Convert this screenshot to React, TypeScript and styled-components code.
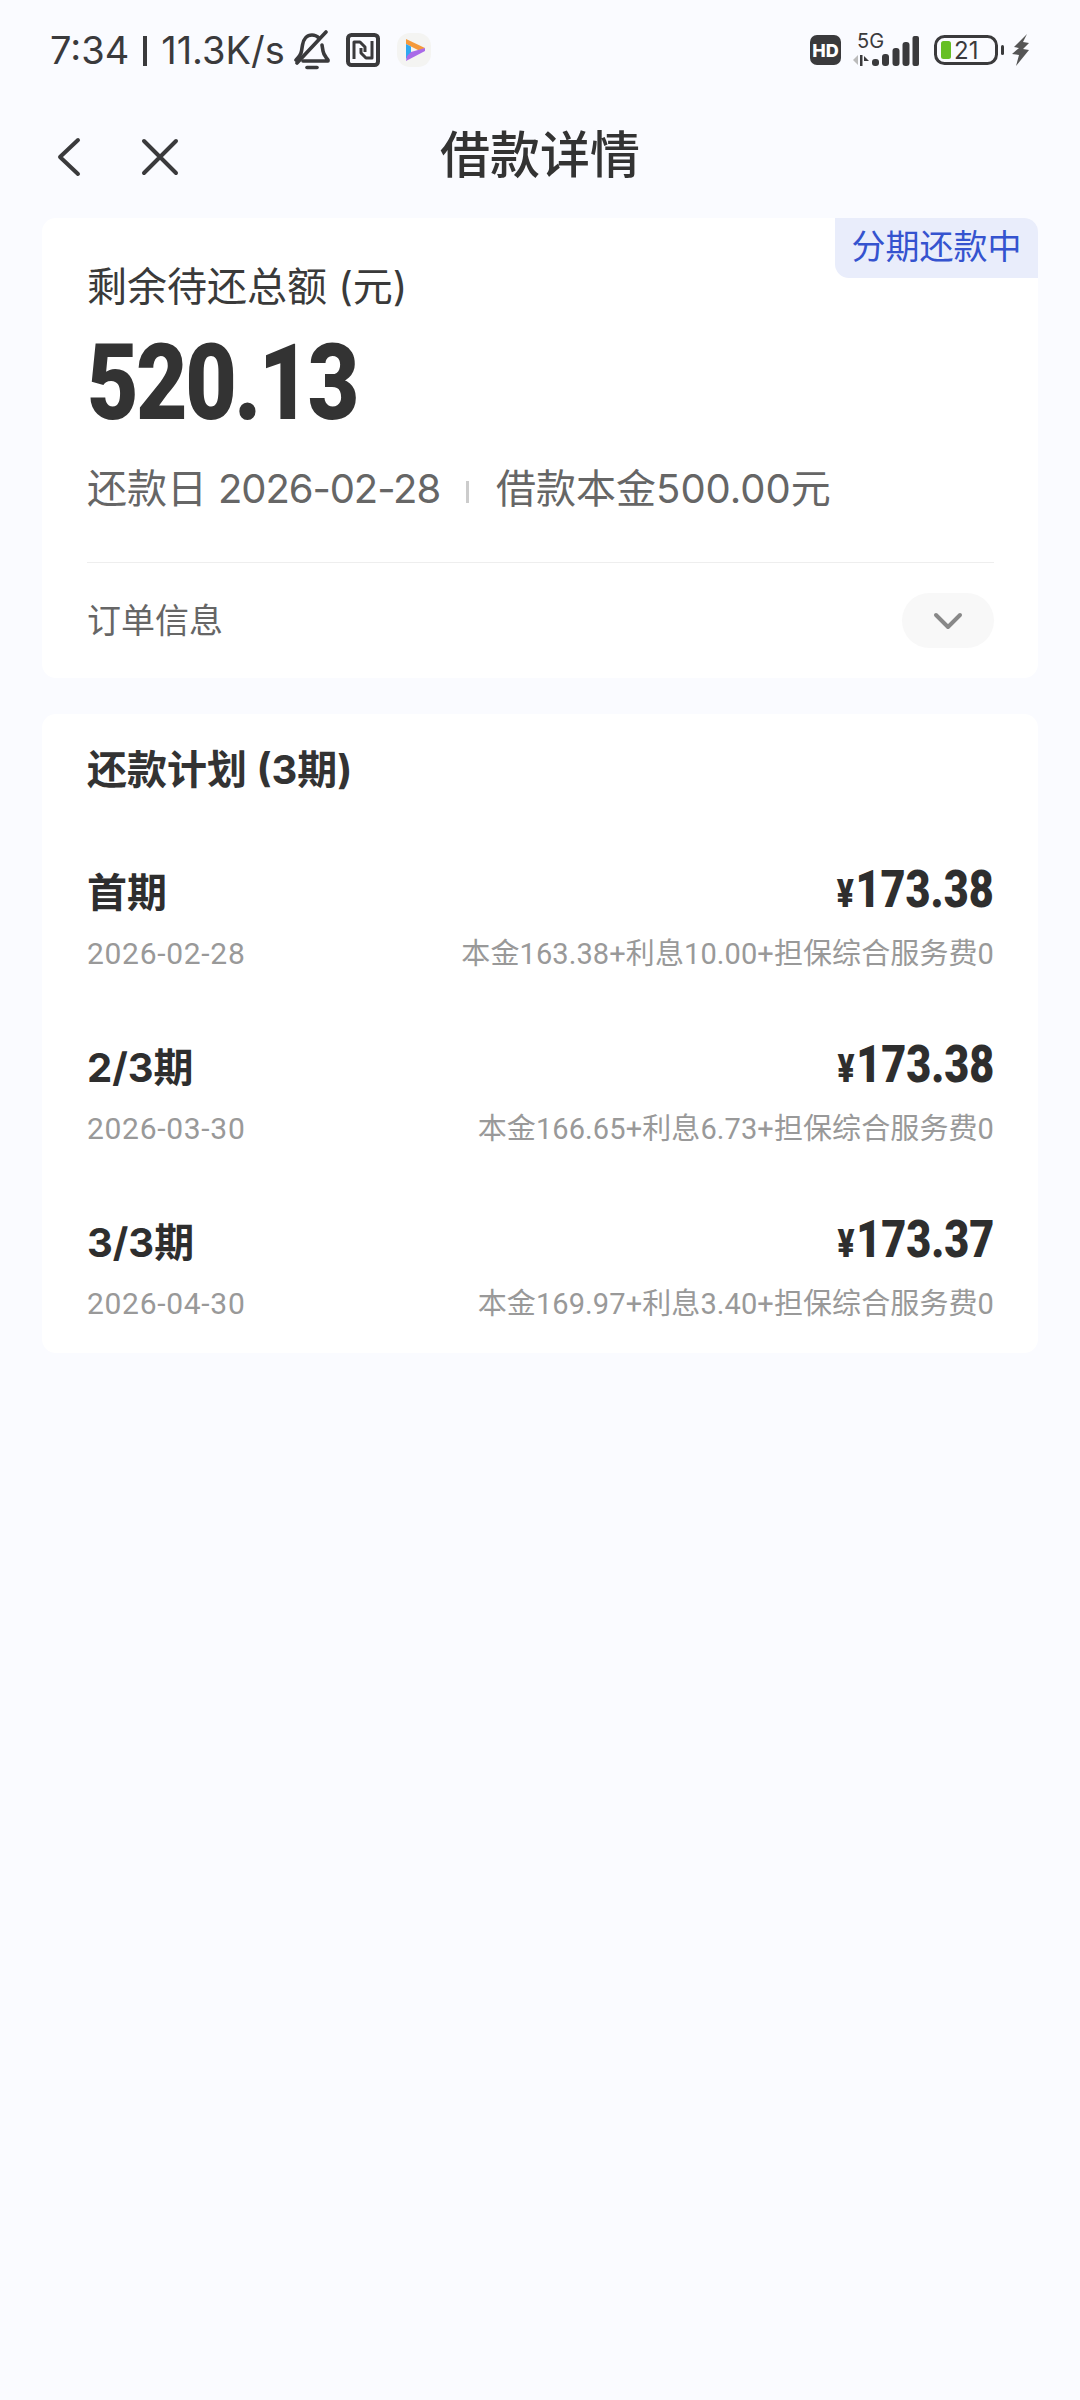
import React from "react";
import styled, { createGlobalStyle } from "styled-components";

const GlobalStyle = createGlobalStyle`
  html, body {
    margin: 0;
    padding: 0;
    background: #fafbff;
  }
  * { box-sizing: border-box; }
`;

const CJK = `Inter, "Noto Sans CJK SC", sans-serif`;
const NUM = `Roboto, "Noto Sans CJK SC", sans-serif`;

const Page = styled.div`
  width: 1080px;
  height: 2400px;
  background: #fafbff;
  font-family: ${CJK};
  color: #333;
  overflow: hidden;
`;

const StatusBar = styled.div`
  height: 100px;
  padding: 0 50px;
  display: flex;
  align-items: center;
  justify-content: space-between;
`;

const StatusLeft = styled.div`
  display: flex;
  align-items: center;
`;

const StatusRight = styled.div`
  display: flex;
  align-items: center;
`;

const Clock = styled.span`
  font-size: 38px;
  line-height: 44px;
  color: #3a3a3c;
`;

const ClockBar = styled.span`
  width: 4px;
  height: 30px;
  margin: 2px 14px 0 14px;
  background: #3a3a3c;
`;

const NavBar = styled.div`
  height: 118px;
  padding: 0 0 4px 57px;
  display: flex;
  align-items: center;
  position: relative;
`;

const NavIcon = styled.svg<{ $gap?: number }>`
  display: block;
  margin-right: ${(p) => p.$gap ?? 0}px;
`;

const NavTitle = styled.div`
  position: absolute;
  left: 0;
  right: 0;
  top: 0;
  text-align: center;
  font-size: 50px;
  line-height: 110px;
  font-weight: 500;
  color: #333;
`;

const Card = styled.div<{ $mb?: number }>`
  position: relative;
  margin: 0 42px ${(p) => p.$mb ?? 0}px 42px;
  width: 996px;
  background: #fff;
  border-radius: 14px;
  padding: 0 44px 0 45px;
`;

const Tag = styled.div`
  position: absolute;
  top: 0;
  right: 0;
  width: 203px;
  height: 60px;
  background: #e9edfb;
  border-radius: 0 14px 0 14px;
  color: #3553cf;
  font-size: 34px;
  line-height: 58px;
  text-align: center;
`;

const BalanceLabel = styled.div`
  padding-top: 45px;
  font-size: 40px;
  line-height: 48px;
  color: #3a3a3a;
`;

const BigAmount = styled.div`
  font-family: ${NUM};
  font-size: 106px;
  line-height: 116px;
  font-weight: 900;
  color: #333;
  margin-top: 14px;
  letter-spacing: -3px;
  transform: scaleX(0.84);
  transform-origin: left center;
`;

const MetaRow = styled.div`
  display: flex;
  align-items: center;
  margin-top: 20px;
  font-size: 40px;
  line-height: 56px;
  color: #666;
`;

const MetaDate = styled.span`
  letter-spacing: -1.1px;
  margin-left: 11px;
`;

const MetaDivider = styled.span`
  width: 3px;
  height: 22px;
  margin: 6px 27px 0 26px;
  background: #ccc;
`;

const CardDivider = styled.div`
  height: 1px;
  margin-top: 45px;
  background: #eee;
`;

const OrderRow = styled.div`
  height: 115px;
  padding-bottom: 4px;
  display: flex;
  align-items: center;
  justify-content: space-between;
  font-size: 34px;
  color: #666;
`;

const ExpandButton = styled.div`
  width: 92px;
  height: 55px;
  margin-top: 4px;
  border-radius: 28px;
  background: #f8f8f8;
  display: flex;
  align-items: center;
  justify-content: center;
`;

const PlanTitle = styled.div`
  padding-top: 33px;
  font-size: 40px;
  line-height: 46px;
  font-weight: 700;
  color: #333;
`;

const PlanList = styled.div`
  padding-top: 67px;
  padding-bottom: 27px;
  display: flex;
  flex-direction: column;
  gap: 59px;
`;

const PlanRow = styled.div`
  display: grid;
  grid-template-columns: 1fr auto;
  align-content: start;
`;

const Period = styled.div`
  font-size: 40px;
  line-height: 60px;
  font-weight: 700;
  color: #2e2e2e;
  padding-top: 3px;
`;

const Amount = styled.div`
  font-family: ${NUM};
  font-size: 52px;
  line-height: 60px;
  font-weight: 900;
  color: #2e2e2e;
  text-align: right;
  transform: scaleX(0.83);
  transform-origin: right center;
`;

const Currency = styled.span`
  font-size: 38px;
  margin-right: 2px;
`;

const PlanDate = styled.div`
  font-family: ${NUM};
  margin-top: 8px;
  font-size: 30px;
  line-height: 44px;
  color: #999;
  letter-spacing: 0.7px;
`;

const PlanDetail = styled.div`
  font-family: ${NUM};
  margin-top: 8px;
  font-size: 29px;
  line-height: 44px;
  color: #999;
  text-align: right;
  letter-spacing: 0.1px;
`;

const plans = [
  { period: "首期", amount: "173.38", date: "2026-02-28", detail: "本金163.38+利息10.00+担保综合服务费0" },
  { period: "2/3期", amount: "173.38", date: "2026-03-30", detail: "本金166.65+利息6.73+担保综合服务费0" },
  { period: "3/3期", amount: "173.37", date: "2026-04-30", detail: "本金169.97+利息3.40+担保综合服务费0" },
];

const BellOff = () => (
  <svg width="36" height="40" viewBox="0 0 36 40" fill="none" stroke="#3a3a3c" strokeWidth="3.6" strokeLinecap="round" strokeLinejoin="round" style={{ marginLeft: 9, marginRight: 16 }}>
    <path d="M2 30c3-3 5-5 5.500-9l1-6C9.500 9 13 5 18 5c3 0 5 1 7 3" />
    <path d="M28 15l1 6c.5 4 3 6 5 9v1H9" />
    <path d="M3 33L32 2" />
    <path d="M13 37.500h10" />
  </svg>
);

const NfcIcon = () => (
  <svg width="34" height="34" viewBox="0 0 34 34" fill="none" stroke="#3a3a3c" strokeLinejoin="round" style={{ marginRight: 17 }}>
    <rect x="2" y="2" width="30" height="30" rx="3.500" strokeWidth="4" />
    <path d="M8 26V9h6l5 5v5" strokeWidth="3" />
    <path d="M26 8v17h-6l-5-5v-5" strokeWidth="3" />
  </svg>
);

const PlayLogo = () => (
  <svg width="34" height="34" viewBox="0 0 34 34">
    <rect width="34" height="34" rx="13" fill="#f4f4f2" />
    <path d="M9 6l19 9-5 3-14-7z" fill="#f5993a" />
    <path d="M9 11l5 2.500v8L9 26z" fill="#2fa8f0" />
    <path d="M14 19l14-4v3L9 28l1-5z" fill="#a96ae8" />
  </svg>
);

const HdBadge = () => (
  <svg width="31" height="30" viewBox="0 0 31 30" style={{ marginRight: 12 }}>
    <rect width="31" height="30" rx="7" fill="#3a3a3c" />
    <text x="15.500" y="21.500" textAnchor="middle" fontSize="18" fontWeight="800" fontFamily="Inter, sans-serif" fill="#fff">HD</text>
  </svg>
);

const SignalIcon = () => (
  <svg width="66" height="42" viewBox="0 -8 66 42" style={{ marginRight: 15, marginTop: -8 }}>
    <text x="4" y="15" fontSize="20" fontFamily="Inter, sans-serif" fill="#3a3a3c">5G</text>
    <path d="M5 22l-5 5 5 5z" fill="#bbb" />
    <path d="M7 22h2.500v11H7z" fill="#3a3a3c" />
    <path d="M11 23l5 5h-5z" fill="#3a3a3c" />
    <rect x="19" y="26" width="7" height="7" rx="3" fill="#3a3a3c" />
    <rect x="29" y="21" width="7" height="12" rx="3" fill="#3a3a3c" />
    <rect x="39.500" y="15" width="7" height="18" rx="3" fill="#3a3a3c" />
    <rect x="49.500" y="9" width="7" height="24" rx="3" fill="#3a3a3c" />
    <rect x="59.500" y="3" width="6.500" height="30" rx="2" fill="#3a3a3c" />
  </svg>
);

const BatteryIcon = () => (
  <svg width="70" height="30" viewBox="0 0 70 30" style={{ marginRight: 8 }}>
    <rect x="1.500" y="1.500" width="61" height="27" rx="9" fill="none" stroke="#3a3a3c" strokeWidth="3" />
    <rect x="7" y="6" width="10" height="18" rx="2.500" fill="#66bf25" />
    <text x="20" y="24" fontSize="24" fontFamily="Inter, sans-serif" fill="#3a3a3c">21</text>
    <rect x="67" y="10" width="3" height="10" rx="1.500" fill="#3a3a3c" />
  </svg>
);

const ChargeIcon = () => (
  <svg width="18" height="32" viewBox="0 0 18 32">
    <path d="M15 0L2 13l5 1-7 6 7 1-3 11 13-16-6-1 6-6-6-1z" fill="#555" />
  </svg>
);

export default function App() {
  return (
    <Page>
      <GlobalStyle />
      <StatusBar>
        <StatusLeft>
          <Clock>7:34</Clock>
          <ClockBar />
          <Clock>11.3K/s</Clock>
          <BellOff />
          <NfcIcon />
          <PlayLogo />
        </StatusLeft>
        <StatusRight>
          <HdBadge />
          <SignalIcon />
          <BatteryIcon />
          <ChargeIcon />
        </StatusRight>
      </StatusBar>

      <NavBar>
        <NavIcon width="24" height="40" viewBox="0 0 24 40" $gap={60} fill="none" stroke="#3a3a3c" strokeWidth="4" strokeLinecap="round" strokeLinejoin="round">
          <path d="M21 3L3 20l18 17" />
        </NavIcon>
        <NavIcon width="38" height="38" viewBox="0 0 38 38" fill="none" stroke="#3a3a3c" strokeWidth="4" strokeLinecap="round">
          <path d="M3 3l32 32M35 3L3 35" />
        </NavIcon>
        <NavTitle>借款详情</NavTitle>
      </NavBar>

      <Card $mb={36}>
        <Tag>分期还款中</Tag>
        <BalanceLabel>剩余待还总额 (元)</BalanceLabel>
        <BigAmount>520.13</BigAmount>
        <MetaRow>
          还款日
          <MetaDate>2026-02-28</MetaDate>
          <MetaDivider />
          借款本金500.00元
        </MetaRow>
        <CardDivider />
        <OrderRow>
          订单信息
          <ExpandButton>
            <svg width="30" height="20" viewBox="0 0 30 20" fill="none" stroke="#888" strokeWidth="4" strokeLinecap="round" strokeLinejoin="round">
              <path d="M3 4l12 12L27 4" />
            </svg>
          </ExpandButton>
        </OrderRow>
      </Card>

      <Card>
        <PlanTitle>还款计划 (3期)</PlanTitle>
        <PlanList>
          {plans.map((p) => (
            <PlanRow key={p.date}>
              <Period>{p.period}</Period>
              <Amount>
                <Currency>¥</Currency>
                {p.amount}
              </Amount>
              <PlanDate>{p.date}</PlanDate>
              <PlanDetail>{p.detail}</PlanDetail>
            </PlanRow>
          ))}
        </PlanList>
      </Card>
    </Page>
  );
}
